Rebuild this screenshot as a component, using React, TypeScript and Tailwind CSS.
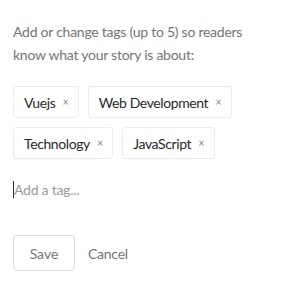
import React from 'react';

const tags = ['Vuejs', 'Web Development', 'Technology', 'JavaScript'];

const App: React.FC = () => {
  return (
    <div className="w-[293px] h-[292px] bg-white px-[13px] pt-[20px] font-['Lato',sans-serif]">
      <p className="max-w-[250px] text-[14px] leading-[23px] tracking-[-0.25px] text-[#757575]">
        Add or change tags (up to 5) so readers know what your story is about:
      </p>

      <div className="mt-[20px] flex flex-wrap gap-[9px]">
        {tags.map(tag => (
          <div
            key={tag}
            className="h-[32px] flex items-center pl-[10px] pr-[9px] border border-[#ececec] rounded-[3px] text-[14px] text-[#292929]"
          >
            <span className="tracking-[-0.4px]">{tag}</span>
            <span className="ml-[7px] text-[11px] text-[#8a8a8a]">×</span>
          </div>
        ))}
      </div>

      <div className="mt-[20px] flex items-center h-[20px]">
        <span className="w-px h-[17px] bg-[#333]" />
        <span className="text-[14px] tracking-[-0.25px] text-[#9a9a9a]">Add a tag...</span>
      </div>

      <div className="mt-[36px] flex items-center gap-[13px]">
        <button className="w-[62px] h-[36px] border border-[#dcdcdc] rounded-[4px] text-[14px] text-[#757575]">
          Save
        </button>
        <button className="text-[14px] tracking-[-0.25px] text-[#757575]">Cancel</button>
      </div>
    </div>
  );
};

export default App;
